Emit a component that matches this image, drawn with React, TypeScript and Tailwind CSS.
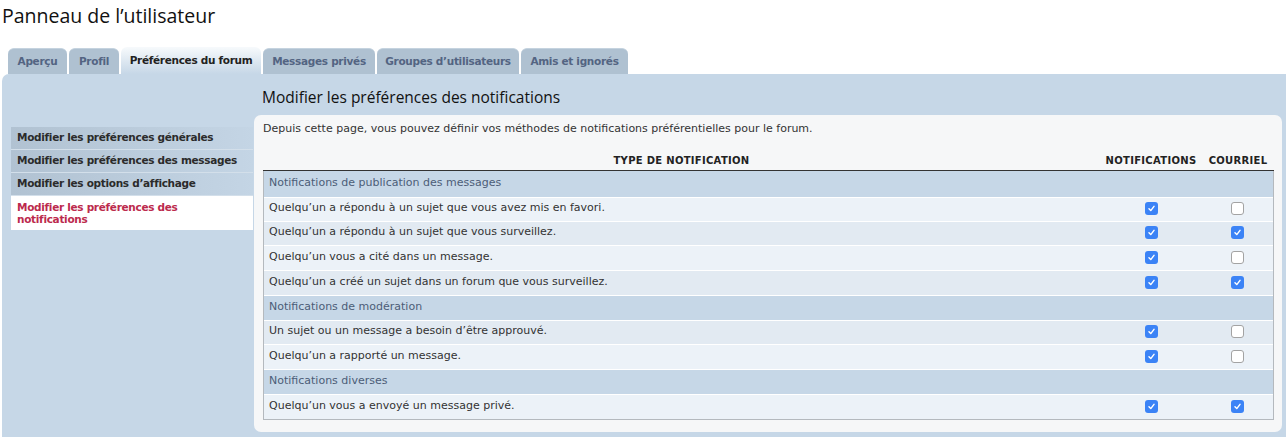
import React from 'react';

type Row = { label: string; notif?: boolean; mail?: boolean; group?: boolean; h: string };

const rows: Row[] = [
  { label: 'Notifications de publication des messages', group: true, h: 'h-[26px]' },
  { label: 'Quelqu’un a répondu à un sujet que vous avez mis en favori.', notif: true, mail: false, h: 'h-[24px]' },
  { label: 'Quelqu’un a répondu à un sujet que vous surveillez.', notif: true, mail: true, h: 'h-[24px]' },
  { label: 'Quelqu’un vous a cité dans un message.', notif: true, mail: false, h: 'h-[25px]' },
  { label: 'Quelqu’un a créé un sujet dans un forum que vous surveillez.', notif: true, mail: true, h: 'h-[25px]' },
  { label: 'Notifications de modération', group: true, h: 'h-[25px]' },
  { label: 'Un sujet ou un message a besoin d’être approuvé.', notif: true, mail: false, h: 'h-[24px]' },
  { label: 'Quelqu’un a rapporté un message.', notif: true, mail: false, h: 'h-[25px]' },
  { label: 'Notifications diverses', group: true, h: 'h-[25px]' },
  { label: 'Quelqu’un vous a envoyé un message privé.', notif: true, mail: true, h: 'h-[25px]' },
];

const tabs = [
  { label: 'Aperçu', w: 'w-[59px]' },
  { label: 'Profil', w: 'w-[50px]' },
  { label: 'Préférences du forum', w: 'w-[140px]', active: true },
  { label: 'Messages privés', w: 'w-[112px]' },
  { label: 'Groupes d’utilisateurs', w: 'w-[142px]' },
  { label: 'Amis et ignorés', w: 'w-[107px]' },
];

const menu = [
  'Modifier les préférences générales',
  'Modifier les préférences des messages',
  'Modifier les options d’affichage',
];

const Check = ({ on }: { on?: boolean }) =>
  on ? (
    <span className="w-[13px] h-[13px] rounded-[3px] bg-[#3b83f6] flex items-center justify-center">
      <svg width="9" height="9" viewBox="0 0 10 10">
        <path d="M2.2 5.3 L4.2 7.3 L7.8 2.6" fill="none" stroke="#fff" strokeWidth="1.6" strokeLinecap="round" strokeLinejoin="round" />
      </svg>
    </span>
  ) : (
    <span className="w-[13px] h-[13px] rounded-[3px] bg-white border border-[#a3a3a3]" />
  );

export default function App() {
  return (
    <div className="w-[1286px] h-[437px] overflow-hidden bg-white font-['DejaVu_Sans',sans-serif] text-[11px] text-[#333]">
      {/* Title */}
      <div className="h-[47px] pl-[2px] pt-[3px] font-['Open_Sans',sans-serif] text-[19.5px] leading-[26px] text-[#111]">
        Panneau de l’utilisateur
      </div>

      {/* Tabs */}
      <div className="h-[27px] pl-[8px] flex items-end gap-[2px]">
        {tabs.map(t => (
          <div
            key={t.label}
            className={`${t.w} flex items-center justify-center font-bold text-[10.5px] tracking-[-0.3px] rounded-t-[6px] ${
              t.active
                ? 'h-[27px] bg-gradient-to-b from-[#f7fafc] to-[#c6d7e7] text-[#222]'
                : 'h-[26px] bg-[#afc1d1] text-[#536482] border-t border-[#c5d3df]'
            }`}
          >
            {t.label}
          </div>
        ))}
      </div>

      {/* Panel */}
      <div className="ml-[2px] h-[400px] bg-[#c6d7e7] rounded-tl-[7px] flex pl-[9px]">
        {/* Side menu */}
        <div className="w-[242px] mr-[1px] pt-[53px] flex flex-col">
          {menu.map(m => (
            <div
              key={m}
              className="h-[23px] border-b border-[#d3dfea] px-[6px] flex items-center font-bold text-[10.5px] tracking-[-0.3px] text-[#2b2b2b] bg-gradient-to-r from-[#b1c2d2] to-[#c4d5e5]"
            >
              {m}
            </div>
          ))}
          <div className="h-[34px] bg-white px-[6px] pt-[5px] font-bold text-[10.5px] tracking-[-0.3px] text-[#bc2a4d] leading-[12px]">
            Modifier les préférences des
            <br />
            notifications
          </div>
        </div>

        {/* Content */}
        <div className="flex-1 flex flex-col">
          <div className="h-[41px] pl-[8px] pt-[13px] font-['Open_Sans',sans-serif] text-[15.5px] leading-[20px] text-[#111]">
            Modifier les préférences des notifications
          </div>
          <div className="w-[1028px] h-[317px] bg-[#f6f7f8] rounded-[7px] pl-[9px] pr-[8px] pt-[7px]">
            <div className="h-[13px] leading-[13px]">
              Depuis cette page, vous pouvez définir vos méthodes de notifications préférentielles pour le forum.
            </div>

            {/* Table */}
            <div className="mt-[15px]">
              <div className="h-[21px] flex items-center border-b border-[#333] font-bold text-[10px] tracking-[0.3px] text-[#222]">
                <div className="flex-1 text-center">TYPE DE NOTIFICATION</div>
                <div className="w-[102px] text-center">NOTIFICATIONS</div>
                <div className="w-[72px] text-center">COURRIEL</div>
              </div>
              <div className="border-l border-r border-b border-[#b4b9be]">
                {rows.map((r, i) => (
                  <div
                    key={i}
                    className={`${r.h} flex items-center pb-[2px] ${i > 0 ? 'border-t border-white' : ''} ${
                      r.group ? 'bg-[#c6d7e7] text-[#4c5d77]' : i % 2 === 1 ? 'bg-[#ecf2f8] text-[#333]' : 'bg-[#e2eaf2] text-[#333]'
                    }`}
                  >
                    <div className="flex-1 pl-[5px]">{r.label}</div>
                    {!r.group && (
                      <>
                        <div className="w-[102px] flex justify-center pl-[2px]">
                          <Check on={r.notif} />
                        </div>
                        <div className="w-[72px] flex justify-center">
                          <Check on={r.mail} />
                        </div>
                      </>
                    )}
                  </div>
                ))}
              </div>
            </div>
          </div>
        </div>
      </div>
    </div>
  );
}
